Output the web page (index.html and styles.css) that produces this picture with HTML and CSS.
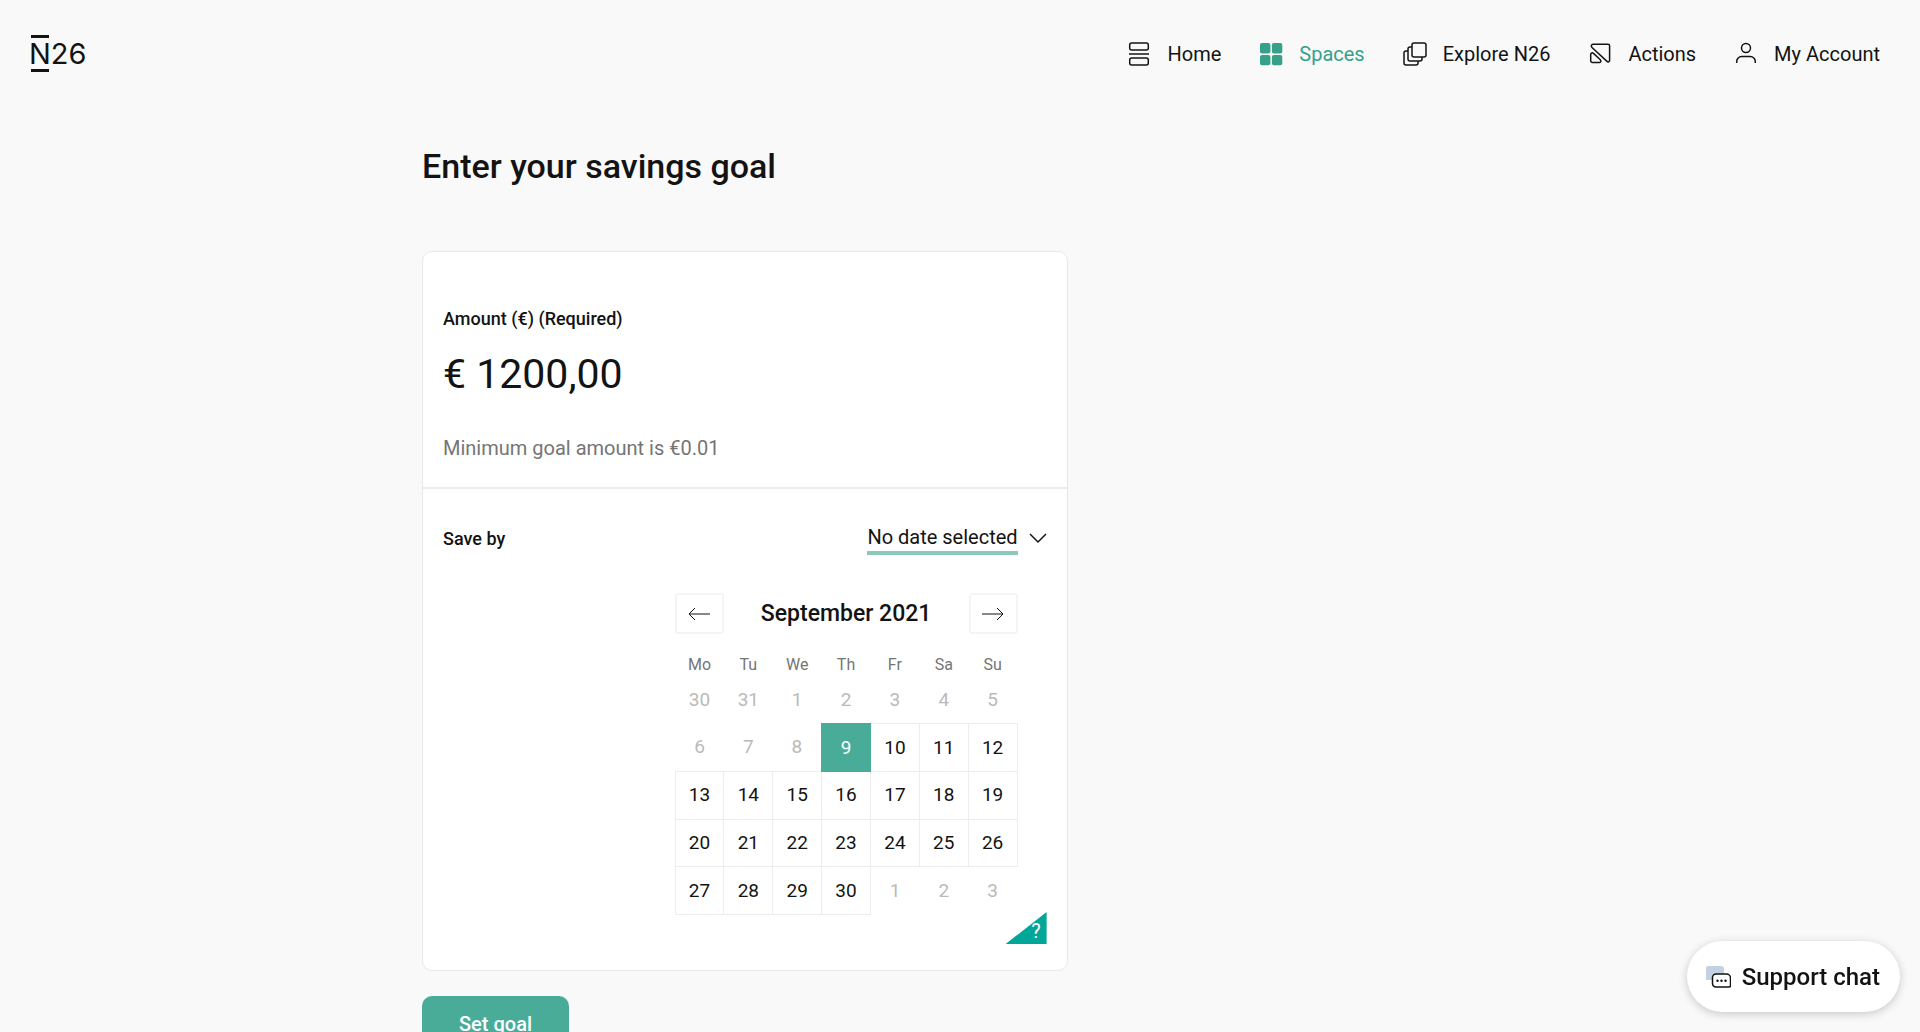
FILE: index.html
```
<!DOCTYPE html>
<html lang="en">

<head>
    <meta charset="UTF-8">
    <meta name="viewport" content="width=device-width, initial-scale=1.0">
    <title>Enter your savings goal</title>
    <link rel="stylesheet" href="styles.css">
</head>

<body>
    <header class="header">
        <a class="logo" href="#"><span class="logo-n">N</span>26</a>
        <nav class="nav">
            <a class="nav-link" href="#">
                <svg class="icon" viewBox="0 0 24 24">
                    <rect x="2.7" y="1" width="18.6" height="7" rx="2" />
                    <path d="M2 12h20" />
                    <rect x="2.7" y="16" width="18.6" height="7" rx="2" />
                </svg>
                Home
            </a>
            <a class="nav-link active" href="#">
                <svg class="icon solid" viewBox="0 0 24 24">
                    <rect x="1" y="1" width="10.4" height="10.4" rx="2" />
                    <rect x="12.9" y="1" width="10.4" height="10.4" rx="2" />
                    <rect x="1" y="12.9" width="10.4" height="10.4" rx="2" />
                    <rect x="12.9" y="12.9" width="10.4" height="10.4" rx="2" />
                </svg>
                Spaces
            </a>
            <a class="nav-link" href="#">
                <svg class="icon" viewBox="0 0 24 24">
                    <rect x="9" y="1" width="14" height="14" rx="2" />
                    <path d="M9 5H7a2 2 0 0 0-2 2v10a2 2 0 0 0 2 2h10a2 2 0 0 0 2-2v-2" />
                    <path d="M5 9H3a2 2 0 0 0-2 2v10a2 2 0 0 0 2 2h10a2 2 0 0 0 2-2v-2" />
                </svg>
                Explore N26
            </a>
            <a class="nav-link" href="#">
                <svg class="icon" viewBox="0 0 24 24">
                    <path d="M5 2.2h15a1.6 1.6 0 0 1 1.6 1.6v14.5c0 1.5-1.5 2.1-2.6 1.1L4 5.5C2.7 4.3 3.4 2.2 5 2.2z" />
                    <path d="M2.7 12.5c0-1.7 1.7-2.1 2.8-1.1l6.8 6.3c1.2 1.1.5 2.9-1.1 2.9H4.5a1.8 1.8 0 0 1-1.8-1.8z" />
                </svg>
                Actions
            </a>
            <a class="nav-link" href="#">
                <svg class="icon" viewBox="0 0 24 24">
                    <circle cx="12" cy="6" r="4.5" />
                    <path d="M2.7 21v-1.5a5 5 0 0 1 5-5h8.6a5 5 0 0 1 5 5V21" />
                </svg>
                My Account
            </a>
        </nav>
    </header>

    <main class="main">
        <h1>Enter your savings goal</h1>
        <form>
            <div class="card">
                <div class="amount">
                    <label for="amount">Amount (€) (Required)</label>
                    <input type="text" id="amount" value="€ 1200,00">
                    <p>Minimum goal amount is €0.01</p>
                </div>
                <div class="save-by">
                    <div class="save-by-row">
                        <label for="date">Save by</label>
                        <button type="button" class="date-toggle" id="date">
                            <span>No date selected</span>
                            <svg class="chevron" viewBox="0 0 18 12">
                                <path d="M1 1l8 8 8-8" />
                            </svg>
                        </button>
                    </div>
                    <div class="calendar">
                        <div class="calendar-head">
                            <button type="button" aria-label="Previous month">
                                <svg viewBox="0 0 22 14">
                                    <path d="M22 7H1M7 1 1 7l6 6" />
                                </svg>
                            </button>
                            <h2>September 2021</h2>
                            <button type="button" aria-label="Next month">
                                <svg viewBox="0 0 22 14">
                                    <path d="M0 7h21M15 1l6 6-6 6" />
                                </svg>
                            </button>
                        </div>
                        <table>
                            <thead>
                                <tr>
                                    <th>Mo</th>
                                    <th>Tu</th>
                                    <th>We</th>
                                    <th>Th</th>
                                    <th>Fr</th>
                                    <th>Sa</th>
                                    <th>Su</th>
                                </tr>
                            </thead>
                            <tbody>
                                <tr>
                                    <td class="off">30</td>
                                    <td class="off">31</td>
                                    <td class="off">1</td>
                                    <td class="off">2</td>
                                    <td class="off">3</td>
                                    <td class="off">4</td>
                                    <td class="off">5</td>
                                </tr>
                                <tr>
                                    <td class="off">6</td>
                                    <td class="off">7</td>
                                    <td class="off">8</td>
                                    <td class="selected">9</td>
                                    <td>10</td>
                                    <td>11</td>
                                    <td>12</td>
                                </tr>
                                <tr>
                                    <td>13</td>
                                    <td>14</td>
                                    <td>15</td>
                                    <td>16</td>
                                    <td>17</td>
                                    <td>18</td>
                                    <td>19</td>
                                </tr>
                                <tr>
                                    <td>20</td>
                                    <td>21</td>
                                    <td>22</td>
                                    <td>23</td>
                                    <td>24</td>
                                    <td>25</td>
                                    <td>26</td>
                                </tr>
                                <tr>
                                    <td>27</td>
                                    <td>28</td>
                                    <td>29</td>
                                    <td>30</td>
                                    <td class="off">1</td>
                                    <td class="off">2</td>
                                    <td class="off">3</td>
                                </tr>
                            </tbody>
                        </table>
                    </div>
                    <button type="button" class="help">?</button>
                </div>
            </div>
            <button type="submit" class="submit">Set goal</button>
        </form>
    </main>

    <button type="button" class="chat">
        <svg viewBox="0 0 26 24">
            <path class="bubble-back" d="M3 1h13a3 3 0 0 1 3 3v11H1V3a2 2 0 0 1 2-2z" />
            <path class="bubble" d="M11 9h10.5a4 4 0 0 1 4 4v7.5a1.5 1.5 0 0 1-1.5 1.5H11a3.5 3.5 0 0 1-3.5-3.5v-6A3.5 3.5 0 0 1 11 9z" />
            <circle cx="12.5" cy="15.8" r="1.2" />
            <circle cx="16.5" cy="15.8" r="1.2" />
            <circle cx="20.5" cy="15.8" r="1.2" />
        </svg>
        Support chat
    </button>
</body>

</html>
```
FILE: styles.css
```
* {
    box-sizing: border-box;
}

body {
    margin: 0;
    background-color: #f9f9f9;
    color: #131313;
    font-family: Roboto, "Liberation Sans", sans-serif;
    font-size: 20px;
    line-height: 28px;
}

button,
input {
    font: inherit;
    color: inherit;
    margin: 0;
    padding: 0;
    border: 0;
    background: none;
}

button {
    cursor: pointer;
}

a {
    color: inherit;
    text-decoration: none;
}

h1,
h2,
p {
    margin: 0;
}

svg {
    fill: none;
    stroke: currentColor;
}

/* Header */
.header {
    display: flex;
    justify-content: space-between;
    align-items: center;
    height: 107px;
    padding: 0 40px 0 29px;
}

.logo {
    display: flex;
    font-family: Inter, sans-serif;
    font-size: 29px;
    line-height: 37px;
}

.logo-n {
    position: relative;
}

/* bars over and under the N */
.logo-n::before {
    content: "";
    position: absolute;
    inset: 0 2px;
    border-top: 3px solid;
    border-bottom: 3px solid;
}

.nav {
    display: flex;
    gap: 38px;
}

.nav-link {
    display: flex;
    align-items: center;
    gap: 16px;
}

.nav-link.active {
    color: #36a18b;
}

.icon {
    width: 24px;
    height: 24px;
    stroke-width: 1.5;
}

.icon.solid {
    fill: currentColor;
    stroke: none;
}

/* Content */
.main {
    max-width: 1076px;
    margin: 0 auto;
    padding: 36px 0;
}

h1 {
    margin-bottom: 62px;
    font-size: 34px;
    font-weight: 500;
    line-height: 46px;
}

.card {
    width: 60%;
    border: 1px solid #e8e8e8;
    border-radius: 10px;
    background-color: #fff;
}

label {
    font-size: 18px;
    font-weight: 500;
}

.amount {
    display: flex;
    flex-direction: column;
    padding: 53px 20px 25px;
    border-bottom: 2px solid #ebebeb;
}

.amount input {
    width: 100%;
    height: 60px;
    margin: 11px 0 30px;
    font-size: 41px;
    outline: 0;
}

.amount p {
    color: #757575;
}

.save-by {
    position: relative;
    padding: 34px 20px 55px;
}

.save-by-row {
    display: flex;
    justify-content: space-between;
    align-items: center;
}

.date-toggle {
    display: flex;
    align-items: center;
    gap: 11px;
}

.date-toggle span {
    border-bottom: 4px solid #8bcabb;
}

.chevron {
    width: 18px;
    height: 12px;
    stroke-width: 1.5;
}

/* Calendar */
.calendar {
    width: 343px;
    margin: 38px 29px 0 auto;
}

.calendar-head {
    display: flex;
    justify-content: space-between;
    align-items: center;
}

.calendar-head button {
    display: flex;
    justify-content: center;
    align-items: center;
    width: 49px;
    height: 41px;
    border: 2px solid #f4f4f4;
    border-radius: 3px;
}

.calendar-head svg {
    width: 22px;
    height: 14px;
}

h2 {
    font-size: 23px;
    font-weight: 500;
}

table {
    width: 100%;
    height: 262px;
    margin-top: 19px;
    border-collapse: collapse;
    table-layout: fixed;
    text-align: center;
}

th {
    height: 24px;
    padding: 0;
    color: #757575;
    font-size: 16px;
    font-weight: 400;
    line-height: 24px;
}

td {
    padding: 0;
    border: 1px solid #ededed;
    font-size: 19px;
}

td.off {
    border: 0;
    color: #bababa;
}

td.selected {
    border-color: #48ac98;
    background-color: #48ac98;
    color: #fff;
}

.help {
    position: absolute;
    right: 20px;
    bottom: 26px;
    width: 41px;
    height: 32px;
    padding: 6px 6px 0 0;
    background-color: #00a698;
    clip-path: polygon(100% 0, 100% 100%, 0 100%);
    color: #fff;
    line-height: 24px;
    text-align: right;
}

.submit {
    height: 56px;
    margin-top: 25px;
    padding: 0 37px;
    border-radius: 10px;
    background-color: #48ac98;
    color: #fff;
    font-weight: 500;
}

.chat {
    position: fixed;
    right: 20px;
    bottom: 20px;
    display: flex;
    align-items: center;
    gap: 11px;
    height: 71px;
    padding: 0 20px 0 18px;
    border-radius: 36px;
    background-color: #fff;
    box-shadow: 0 2px 10px rgba(0, 0, 0, 0.2);
    font-size: 24px;
    font-weight: 500;
}

.chat svg {
    width: 26px;
    height: 24px;
}

.chat circle {
    fill: currentColor;
    stroke: none;
}

.bubble-back {
    fill: #c3d2e0;
    stroke: none;
}

.bubble {
    fill: #fff;
    stroke-width: 1.5;
}
```
